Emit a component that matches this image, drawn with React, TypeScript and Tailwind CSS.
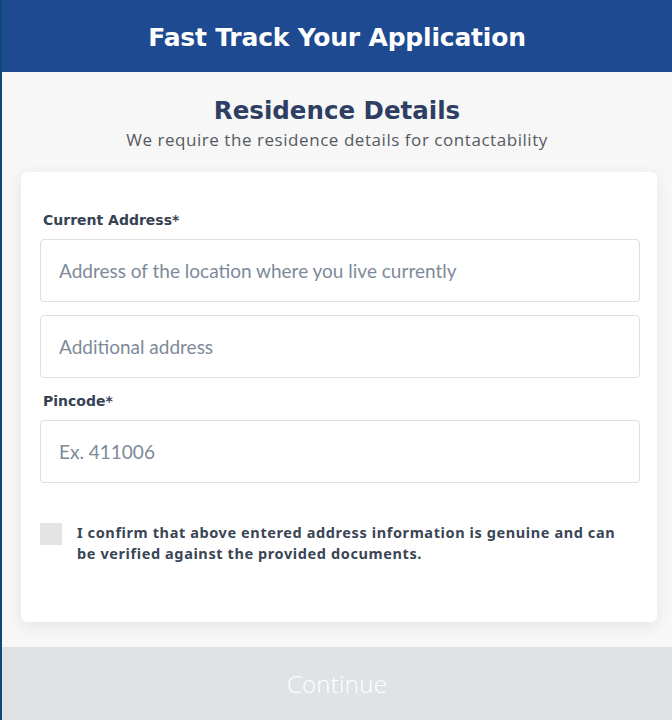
import React from "react";

export default function App() {
  const inputCls =
    "w-full h-[63px] border border-[#dcdfe3] rounded-[4px] px-[18px] text-[19px] outline-none font-['Lato','Open_Sans',sans-serif] placeholder:text-[#7d8a99]";
  const labelCls =
    "block pl-[3px] text-[14px] font-bold text-[#364252] leading-[18px] font-['DejaVu_Sans','Noto_Sans',sans-serif]";
  return (
    <div className="w-[672px] h-[720px] flex flex-col bg-[#f7f7f7] border-l-2 border-[#0c4a7c] overflow-hidden">
      <div className="h-[72px] shrink-0 bg-[#1e4a91] flex items-center justify-center pt-[3px]">
        <h1 className="text-white font-bold text-[25px] tracking-[-0.2px] font-['DejaVu_Sans','Noto_Sans',sans-serif]">
          Fast Track Your Application
        </h1>
      </div>
      <div className="flex flex-col items-center pt-[21px]">
        <h2 className="text-[#2e3f63] font-bold text-[24.5px] leading-[36px] font-['DejaVu_Sans','Noto_Sans',sans-serif]">
          Residence Details
        </h2>
        <p className="text-[#555a62] text-[17px] tracking-[0.55px] leading-[22px] font-['Open_Sans',sans-serif]">
          We require the residence details for contactability
        </p>
      </div>
      <div className="ml-[19px] mr-[15px] mt-[21px] bg-white rounded-[6px] shadow-[0_4px_16px_rgba(0,0,0,0.08)] pl-[19px] pr-[17px] pt-[39px] pb-[58px]">
        <label className={labelCls}>Current Address*</label>
        <input className={"mt-[10px] " + inputCls} placeholder="Address of the location where you live currently" />
        <input className={"mt-[13px] " + inputCls} placeholder="Additional address" />
        <label className={"mt-[14px] " + labelCls}>Pincode*</label>
        <input className={"mt-[10px] " + inputCls} placeholder="Ex. 411006" />
        <div className="flex items-start gap-[15px] mt-[40px]">
          <div className="w-[22px] h-[22px] shrink-0 bg-[#e4e4e4]"></div>
          <p className="max-w-[550px] -mt-[1px] text-[14.5px] font-bold tracking-[0.6px] text-[#3a4555] leading-[21px] font-['Noto_Sans',sans-serif]">
            I confirm that above entered address information is genuine and can be verified against the provided documents.
          </p>
        </div>
      </div>
      <div className="mt-auto h-[73px] shrink-0 bg-[#dfe3e6] flex items-center justify-center">
        <span className="text-white text-[24px] font-light tracking-[0.3px] font-['Open_Sans',sans-serif]">
          Continue
        </span>
      </div>
    </div>
  );
}
